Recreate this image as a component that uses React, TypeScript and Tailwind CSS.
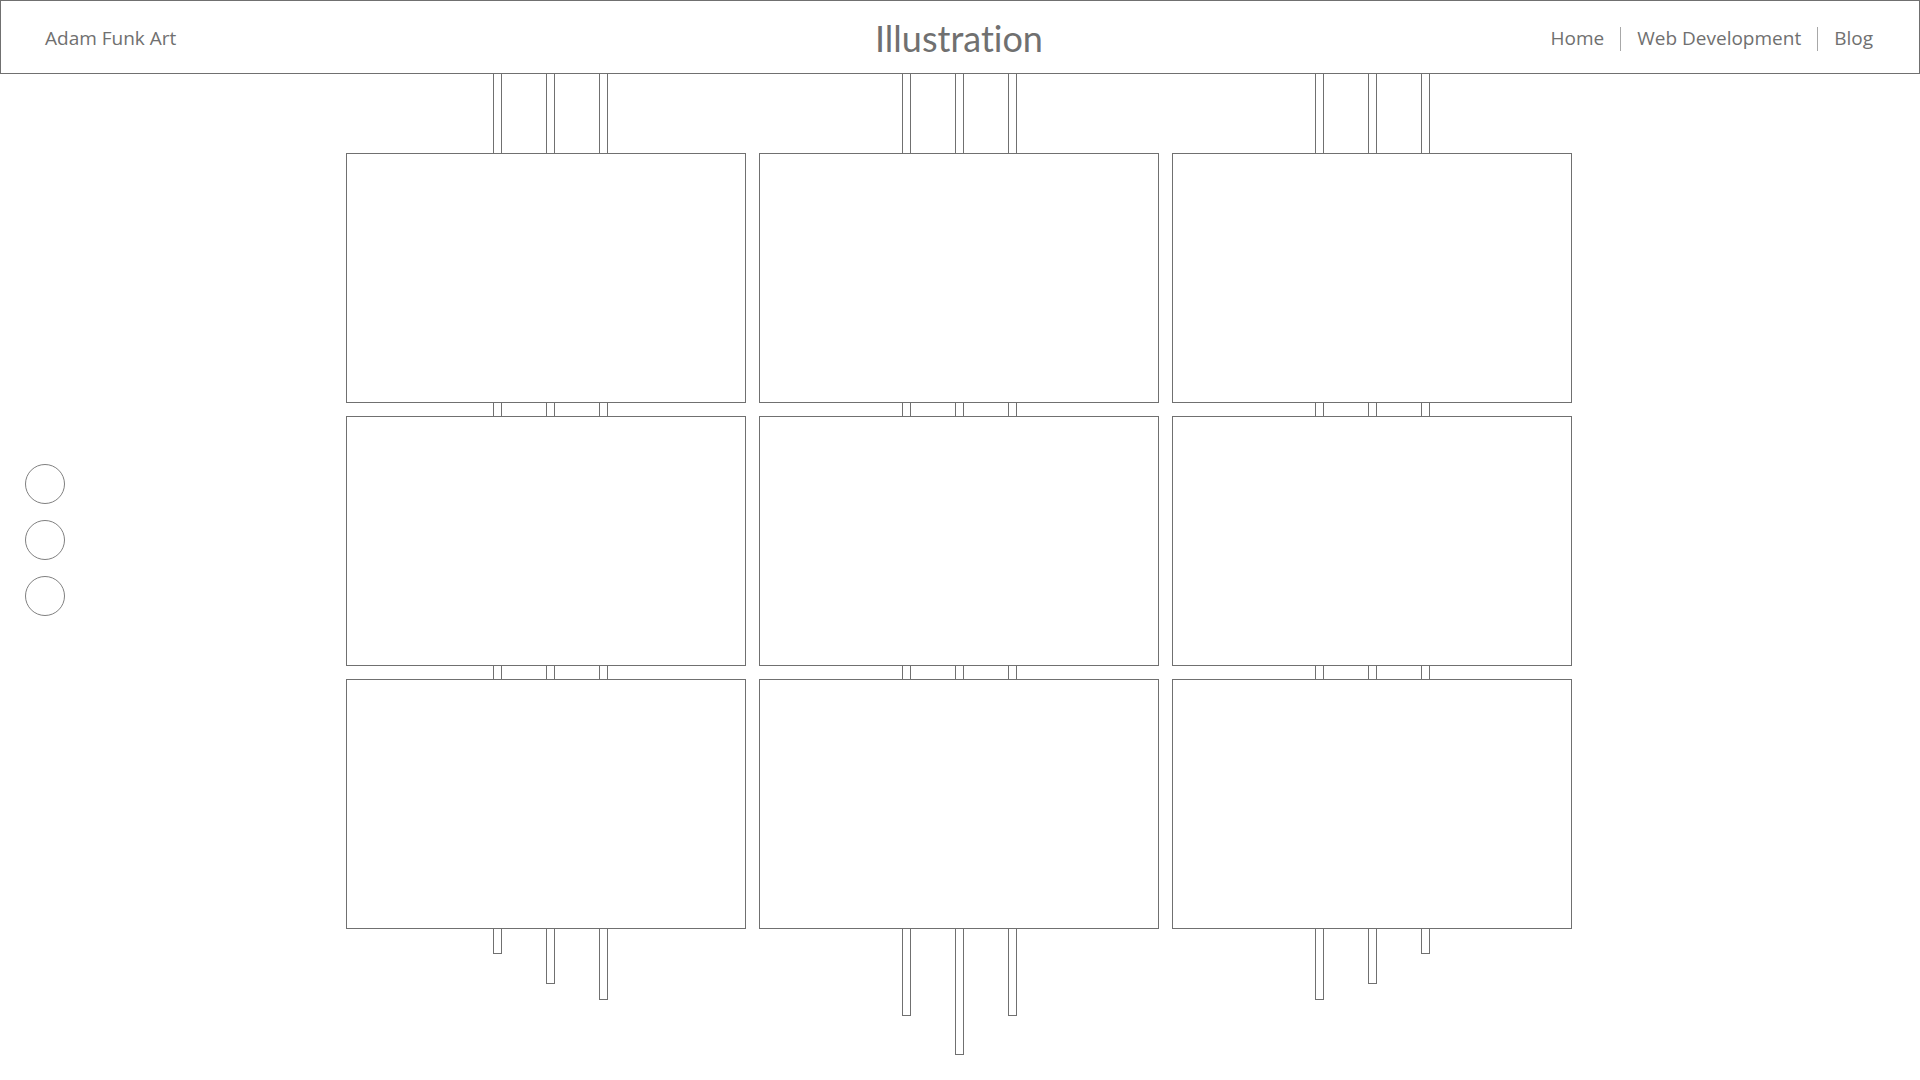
import React from "react";

const font = { fontFamily: '"Open Sans", "Noto Sans", sans-serif' };

function Bars({ pl, heights, bottom }: { pl: string; heights: number[]; bottom?: boolean }) {
  return (
    <div className={`flex items-start gap-[44px] ${pl}`}>
      {heights.map((h, i) => (
        <div
          key={i}
          className={`w-[9px] border-x border-[#707070] ${bottom ? "border-b" : ""}`}
          style={{ height: h }}
        />
      ))}
    </div>
  );
}

function Card() {
  return <div className="h-[250px] w-[400px] border border-[#707070] bg-white" />;
}

function Column({ pl, bottom }: { pl: string; bottom: number[] }) {
  return (
    <div className="flex w-[400px] flex-col">
      <Bars pl={pl} heights={[79, 79, 79]} />
      <Card />
      <Bars pl={pl} heights={[13, 13, 13]} />
      <Card />
      <Bars pl={pl} heights={[13, 13, 13]} />
      <Card />
      <Bars pl={pl} heights={bottom} bottom />
    </div>
  );
}

export default function App() {
  return (
    <div className="relative min-h-[1080px] w-full bg-white text-[#707070]" style={font}>
      <header className="grid h-[74px] grid-cols-[1fr_auto_1fr] items-center border border-[#707070] pl-[44px] pr-[46px]">
        <div className="pt-[3px] text-[19px] leading-none">Adam Funk Art</div>
        <h1
          className="pt-[1px] text-[36px] leading-none [font-variant-ligatures:none]"
          style={{ fontFamily: 'Lato, "Open Sans", sans-serif' }}
        >
          Illustration
        </h1>
        <nav className="flex items-center justify-end pt-[3px] text-[19px] leading-none">
          <a>Home</a>
          <span className="mx-[16px] h-[24px] w-px bg-[#a8a8a8]" />
          <a>Web Development</a>
          <span className="mx-[16px] h-[24px] w-px bg-[#a8a8a8]" />
          <a>Blog</a>
        </nav>
      </header>
      <main className="flex gap-[13px] pl-[346px]">
        <Column pl="pl-[147px]" bottom={[25, 55, 71]} />
        <Column pl="pl-[143px]" bottom={[87, 126, 87]} />
        <Column pl="pl-[143px]" bottom={[71, 55, 25]} />
      </main>
      <div className="absolute left-[25px] top-[464px] flex flex-col gap-[16px]">
        <div className="h-10 w-10 rounded-full border border-[#808080]" />
        <div className="h-10 w-10 rounded-full border border-[#808080]" />
        <div className="h-10 w-10 rounded-full border border-[#808080]" />
      </div>
    </div>
  );
}
